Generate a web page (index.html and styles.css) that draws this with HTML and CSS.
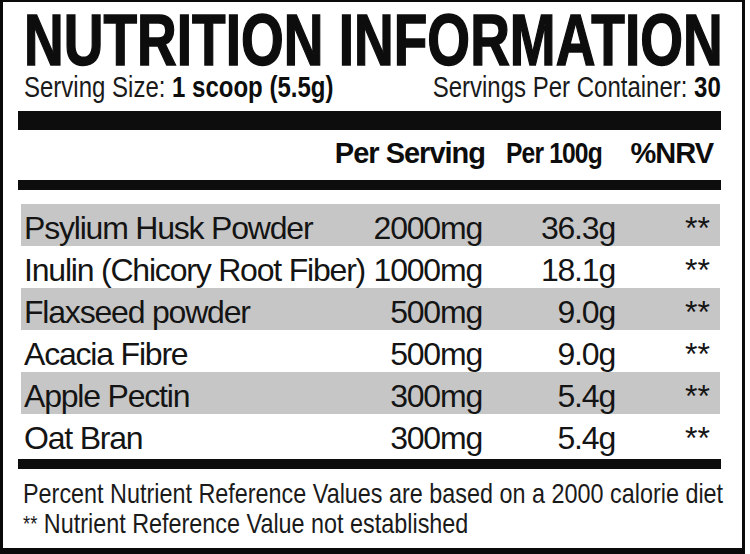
FILE: index.html
```html
<!DOCTYPE html>
<html>
<head>
<meta charset="utf-8">
<link rel="stylesheet" href="styles.css">
</head>
<body>
<div class="label">
  <h1 class="title"><span class="title-text">NUTRITION INFORMATION</span></h1>
  <div class="serving-wrap">
    <div class="serving">
      <span>Serving Size: <b>1 scoop (5.5g)</b></span>
      <span>Servings Per Container: <b>30</b></span>
    </div>
  </div>
  <div class="bar bar-thick"></div>
  <div class="head">
    <span></span>
    <span>Per Serving</span>
    <span><span class="head-narrow">Per 100g</span></span>
    <span>%NRV</span>
  </div>
  <div class="bar bar-thin"></div>
  <div class="rows">
    <div class="row shade"><span class="name">Psylium Husk Powder</span><span>2000mg</span><span>36.3g</span><span class="nrv">**</span></div>
    <div class="row"><span class="name">Inulin (Chicory Root Fiber)</span><span>1000mg</span><span>18.1g</span><span class="nrv">**</span></div>
    <div class="row shade"><span class="name">Flaxseed powder</span><span>500mg</span><span>9.0g</span><span class="nrv">**</span></div>
    <div class="row"><span class="name">Acacia Fibre</span><span>500mg</span><span>9.0g</span><span class="nrv">**</span></div>
    <div class="row shade"><span class="name">Apple Pectin</span><span>300mg</span><span>5.4g</span><span class="nrv">**</span></div>
    <div class="row"><span class="name">Oat Bran</span><span>300mg</span><span>5.4g</span><span class="nrv">**</span></div>
  </div>
  <div class="bar bar-foot"></div>
  <div class="foot">
    <p><span class="foot-text">Percent Nutrient Reference Values are based on a 2000 calorie diet</span></p>
    <p><span class="foot-text"><span class="stars">**</span> Nutrient Reference Value not established</span></p>
  </div>
</div>
</body>
</html>
```

FILE: styles.css
```css
html, body {
  margin: 0;
  padding: 0;
  background: #ffffff;
}

.label {
  box-sizing: border-box;
  width: 745px;
  height: 554px;
  border: 3px solid #0a0a0a;
  border-top-width: 2px;
  border-bottom-width: 6px;
  padding: 6px 21px 0 15px;
  background: #ffffff;
  color: #111111;
  font-family: "Liberation Sans", Arial, sans-serif;
  overflow: hidden;
}

.title {
  margin: 0;
  padding-left: 6px;
  font-weight: 700;
  font-size: 72px;
  line-height: 64px;
  color: #0d0d0d;
  white-space: nowrap;
}

.title-text {
  display: inline-block;
  transform: scaleX(0.764);
  transform-origin: left center;
  -webkit-text-stroke: 1.5px #0d0d0d;
}

.serving-wrap {
  padding: 0 2px 0 6px;
  height: 30px;
}

.serving {
  display: flex;
  justify-content: space-between;
  width: 871px;
  transform: scaleX(0.8);
  transform-origin: left center;
  font-size: 30px;
  line-height: 30px;
  color: #1a1a1a;
  white-space: nowrap;
}

.serving b {
  color: #0d0d0d;
}

.bar {
  background: #0d0d0d;
}

.bar-thick {
  height: 19px;
  margin-top: 9px;
}

.head {
  display: grid;
  grid-template-columns: 1fr 160px 117px 111px;
  padding-right: 8px;
  margin-top: 5px;
  font-weight: 700;
  font-size: 29px;
  line-height: 36px;
  letter-spacing: -1px;
  text-align: right;
  color: #0d0d0d;
  white-space: nowrap;
}

.head-narrow {
  display: inline-block;
  transform: scaleX(0.85);
  transform-origin: right center;
}

.bar-thin {
  height: 10px;
  margin-top: 9px;
}

.rows {
  margin: 14px 1px 0 3px;
}

.row {
  display: grid;
  grid-template-columns: 1fr 110px 133px 95px;
  height: 42px;
  box-sizing: border-box;
  padding: 6px 10px 0 3px;
  font-size: 32px;
  line-height: 36px;
  letter-spacing: -1.2px;
  text-align: right;
  white-space: nowrap;
  color: #141414;
}

.row .name {
  text-align: left;
}

.row .nrv {
  font-size: 32px;
  letter-spacing: 0;
}

.shade {
  background: #c6c6c6;
}

.bar-foot {
  height: 10px;
  margin-top: 3px;
}

.foot {
  margin-top: 10px;
  padding-left: 5px;
  font-size: 28px;
  line-height: 30px;
  color: #1a1a1a;
  white-space: nowrap;
}

.foot p {
  margin: 0;
}

.foot-text {
  display: inline-block;
  transform: scaleX(0.835);
  transform-origin: left center;
}

.stars {
  font-size: 22px;
  vertical-align: 2px;
}
```
